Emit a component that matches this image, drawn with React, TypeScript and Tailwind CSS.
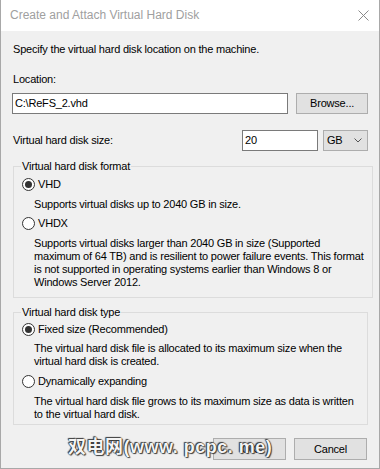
import React from "react";

const Radio = ({ checked }: { checked: boolean }) => (
  <span className="relative inline-flex h-[13px] w-[13px] shrink-0 items-center justify-center rounded-full border border-[#333] bg-white">
    {checked && <span className="h-[7px] w-[7px] rounded-full bg-[#333]" />}
  </span>
);

export default function App() {
  return (
    <div
      className="relative flex h-[469px] w-[380px] flex-col overflow-hidden whitespace-nowrap border-x border-b border-[#a8a8a8] bg-[#f0f0f0] text-[11px] leading-[15px] tracking-[-0.2px] text-black"
      style={{ fontFamily: '"Liberation Sans", Arial, sans-serif' }}
    >
      {/* Title bar */}
      <div className="flex h-[31px] shrink-0 items-center justify-between bg-white pl-[9px] pr-[10px]">
        <span className="text-[12px] tracking-[0px] text-[#a0a0a0]">Create and Attach Virtual Hard Disk</span>
        <svg width="11" height="11" viewBox="0 0 11 11">
          <path d="M0.5 0.5 L10.5 10.5 M10.5 0.5 L0.5 10.5" stroke="#8a8a8a" strokeWidth="1" />
        </svg>
      </div>

      <div className="flex flex-col px-[11px]">
        <div className="mt-[11px] pl-[1px]">Specify the virtual hard disk location on the machine.</div>
        <div className="mt-[15px] pl-[1px]">Location:</div>
        <div className="mt-[6px] flex gap-[8px]">
          <div className="flex h-[21px] w-[277px] items-center border border-[#7a7a7a] bg-white pl-[2px]">
            C:\ReFS_2.vhd
          </div>
          <div className="flex h-[21px] w-[72px] items-center justify-center border border-[#adadad] bg-[#e1e1e1]">
            Browse...
          </div>
        </div>

        <div className="mt-[16px] flex h-[21px] items-center">
          <span className="flex-1 pl-[1px]">Virtual hard disk size:</span>
          <div className="flex h-[21px] w-[76px] items-center border border-[#7a7a7a] bg-white pl-[2px]">20</div>
          <div className="ml-[5px] flex h-[21px] w-[45px] items-center justify-between border border-[#adadad] bg-[#e1e1e1] pl-[3px] pr-[5px]">
            <span>GB</span>
            <svg width="8" height="5" viewBox="0 0 8 5">
              <path d="M0.5 0.5 L4 4 L7.5 0.5" stroke="#555" strokeWidth="1" fill="none" />
            </svg>
          </div>
        </div>

        <fieldset className="mt-[8px] ml-[1px] border border-[#dcdcdc] px-[8px] pb-[8px]">
          <legend className="-ml-[1px] px-[1px]">Virtual hard disk format</legend>
          <div className="mt-[3px] flex items-center gap-[3px]">
            <Radio checked />
            <span>VHD</span>
          </div>
          <div className="mt-[6px] pl-[12px] leading-[13px]">Supports virtual disks up to 2040 GB in size.</div>
          <div className="mt-[5px] flex items-center gap-[3px]">
            <Radio checked={false} />
            <span>VHDX</span>
          </div>
          <div className="mt-[6px] flex flex-col pl-[12px] leading-[13px]">
            <span>Supports virtual disks larger than 2040 GB in size (Supported</span>
            <span>maximum of 64 TB) and is resilient to power failure events. This format</span>
            <span>is not supported in operating systems earlier than Windows 8 or</span>
            <span>Windows Server 2012.</span>
          </div>
        </fieldset>

        <fieldset className="mt-[7px] ml-[1px] border border-[#dcdcdc] px-[8px] pb-[3px]">
          <legend className="-ml-[1px] px-[1px]">Virtual hard disk type</legend>
          <div className="mt-[2px] flex items-center gap-[3px]">
            <Radio checked />
            <span>Fixed size (Recommended)</span>
          </div>
          <div className="mt-[5px] flex flex-col pl-[12px] leading-[13px]">
            <span>The virtual hard disk file is allocated to its maximum size when the</span>
            <span>virtual hard disk is created.</span>
          </div>
          <div className="mt-[6px] flex items-center gap-[3px]">
            <Radio checked={false} />
            <span>Dynamically expanding</span>
          </div>
          <div className="mt-[6px] flex flex-col pl-[12px] leading-[13px]">
            <span>The virtual hard disk file grows to its maximum size as data is written</span>
            <span>to the virtual hard disk.</span>
          </div>
        </fieldset>

        <div className="mt-[13px] flex justify-end gap-[8px] pr-[1px]">
          <div className="flex h-[22px] w-[73px] items-center justify-center border border-[#adadad] bg-[#e1e1e1]">
            OK
          </div>
          <div className="flex h-[22px] w-[73px] items-center justify-center border border-[#adadad] bg-[#e1e1e1]">
            Cancel
          </div>
        </div>
      </div>

      {/* Watermark */}
      <div
        className="absolute left-[67px] top-[435px] text-[18px] font-bold leading-[24px] tracking-[0.5px] text-[#f4f4f4] [text-shadow:0_0_1px_#222,0_0_1px_#222,1px_1px_1px_#444,-1px_-1px_1px_#444]"
        style={{ fontFamily: '"Liberation Sans", "Noto Sans CJK SC", sans-serif' }}
      >
        双电网(www. pcpc. me)
      </div>
    </div>
  );
}
